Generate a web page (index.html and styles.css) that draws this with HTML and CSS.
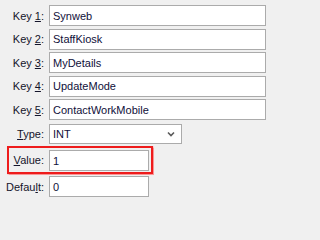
FILE: index.html
```html
<!DOCTYPE html>
<html>
<head>
<meta charset="utf-8">
<link rel="stylesheet" href="styles.css">
</head>
<body>
<div class="form">
  <div class="row"><span class="label">Key <u>1</u>:</span><div class="field wide">Synweb</div></div>
  <div class="row"><span class="label">Key <u>2</u>:</span><div class="field wide">StaffKiosk</div></div>
  <div class="row"><span class="label">Key <u>3</u>:</span><div class="field wide">MyDetails</div></div>
  <div class="row"><span class="label">Key <u>4</u>:</span><div class="field wide">UpdateMode</div></div>
  <div class="row"><span class="label">Key <u>5</u>:</span><div class="field wide">ContactWorkMobile</div></div>
  <div class="row type-row"><span class="label"><u>T</u>ype:</span>
    <div class="field select"><span>INT</span>
      <svg class="chev" width="8" height="6" viewBox="0 0 8 6"><path d="M1 1.5 L4 4.5 L7 1.5" fill="none" stroke="#5a5a5a" stroke-width="1.6"/></svg>
    </div>
  </div>
  <div class="row highlight"><span class="label"><u>V</u>alue:</span><div class="field short">1</div></div>
  <div class="row default-row"><span class="label">Defau<u>l</u>t:</span><div class="field short">0</div></div>
</div>
</body>
</html>
```
FILE: styles.css
```css
html, body {
  margin: 0;
  padding: 0;
  background: #f0f0f0;
}
body {
  width: 271px;
  height: 202px;
  overflow: hidden;
  font-family: "Liberation Sans", Arial, sans-serif;
  font-size: 11px;
  color: #14142a;
}
.form {
  display: flex;
  flex-direction: column;
  gap: 2.5px;
  padding-top: 5px;
}
.row {
  display: flex;
  align-items: center;
  gap: 5px;
  height: 21px;
}
.label {
  width: 44px;
  text-align: right;
  white-space: nowrap;
}
.label u {
  text-decoration-thickness: 1px;
  text-underline-offset: 1px;
}
.field {
  box-sizing: border-box;
  height: 21px;
  background: #fff;
  border: 1px solid #ababab;
  padding: 0 3px;
  display: flex;
  align-items: center;
  color: #10103a;
  white-space: nowrap;
  overflow: hidden;
}
.wide {
  width: 217px;
}
.select {
  width: 133px;
  height: 20px;
  justify-content: space-between;
  padding-right: 6px;
}
.chev {
  display: block;
}
.type-row {
  margin-top: 1px;
}
.short {
  width: 100px;
}
.highlight {
  box-sizing: border-box;
  margin-top: -1px;
  margin-left: 7px;
  width: 146px;
  height: 28px;
  border: 2px solid #ee1c1c;
  box-shadow: 0 0 1px 0.5px rgba(255, 90, 90, 0.6);
  padding: 2px 2px 1px 0;
  align-items: flex-start;
}
.highlight .label {
  width: 35px;
  line-height: 21px;
}
.default-row {
  margin-top: -0.5px;
}
```
